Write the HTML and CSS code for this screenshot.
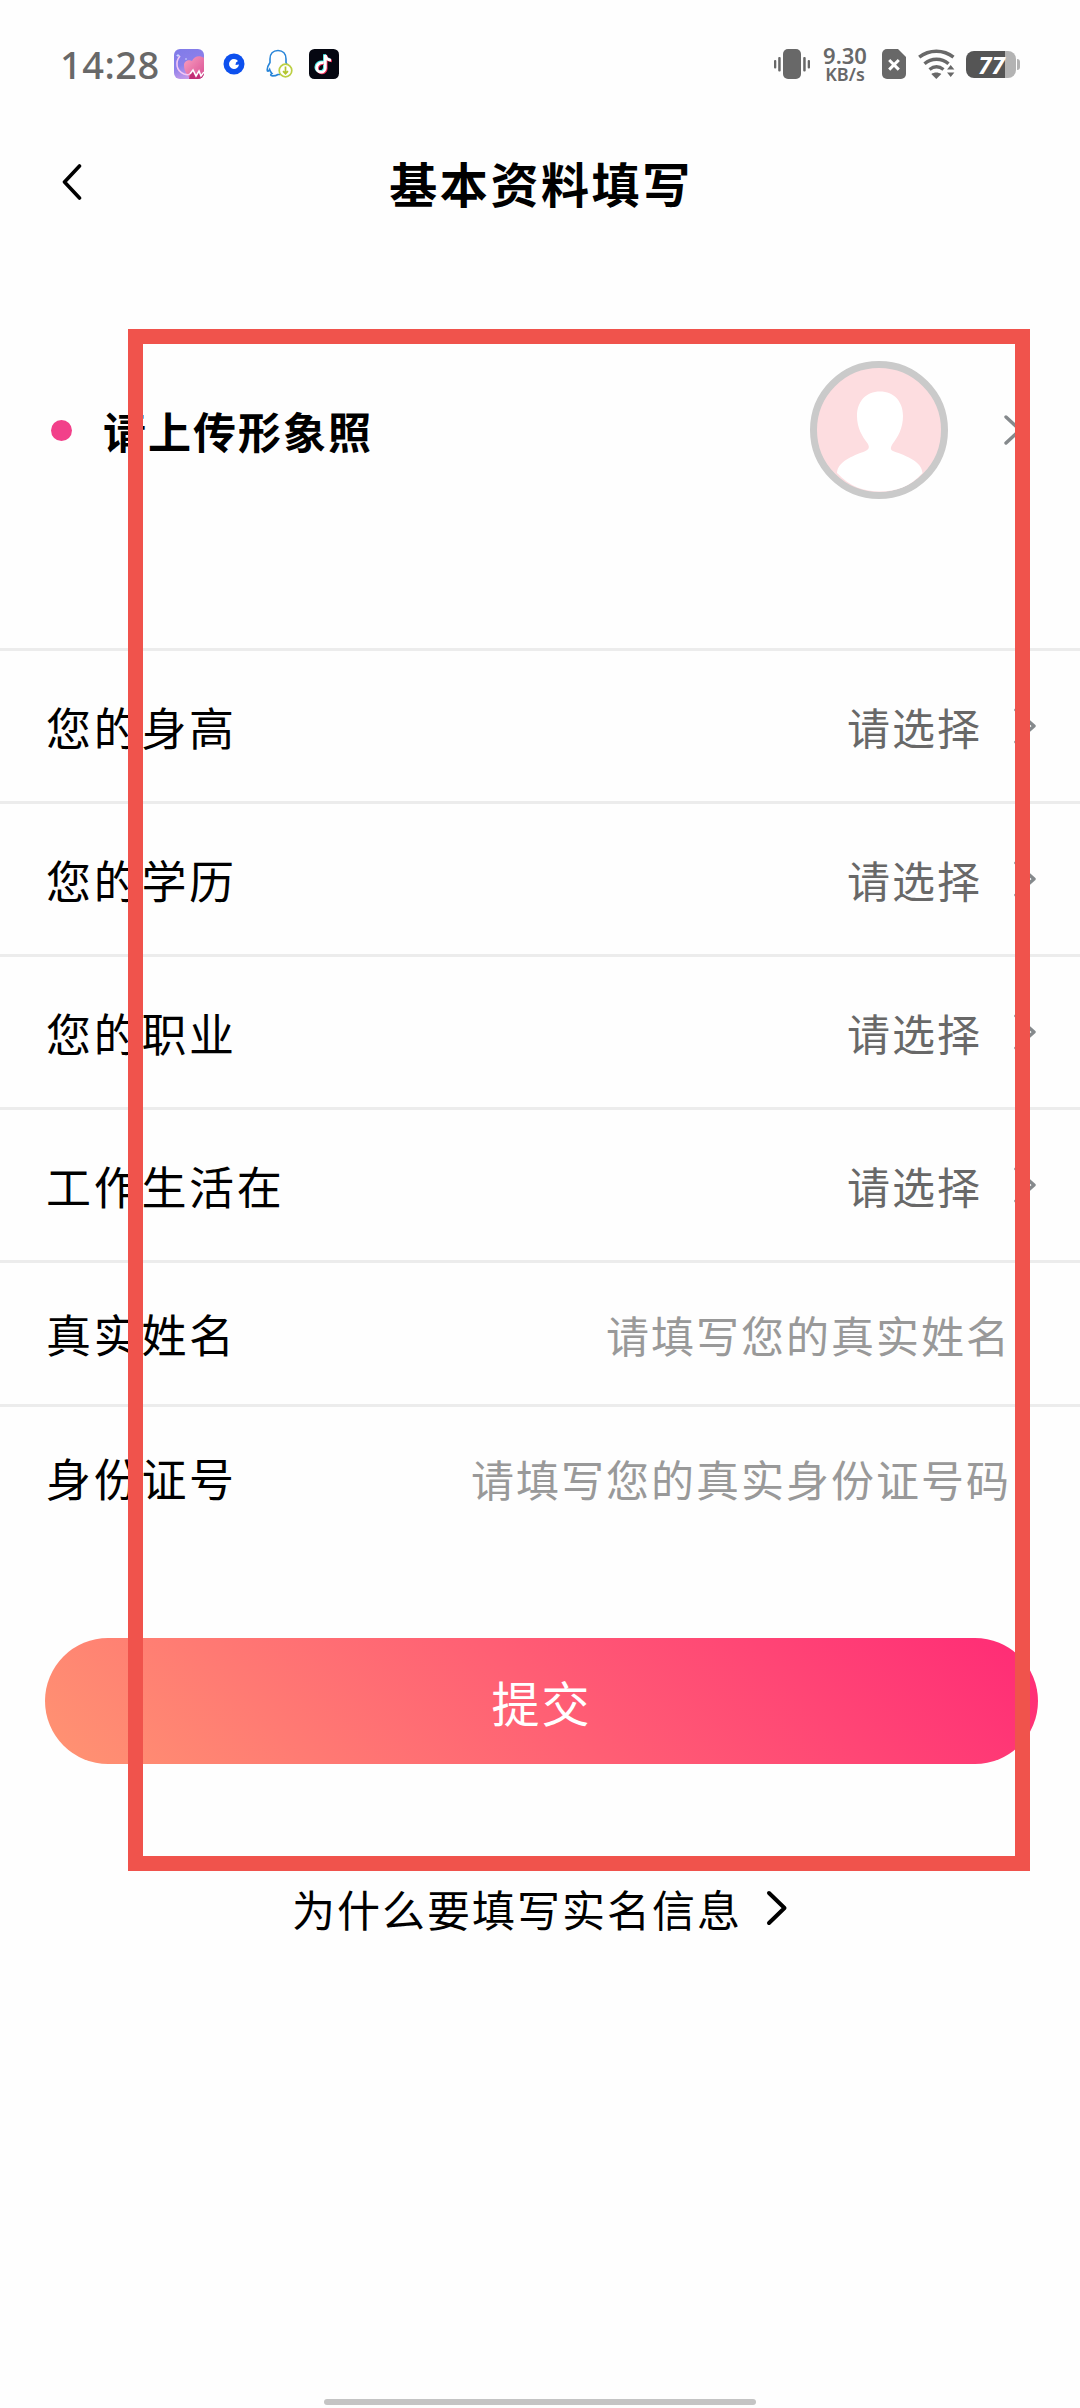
FILE: index.html
```html
<!DOCTYPE html>
<html lang="zh-CN">
<head>
<meta charset="utf-8">
<title>基本资料填写</title>
<link rel="stylesheet" href="styles.css">
</head>
<body>
<div class="screen">
  <header class="status">
    <div class="status-left">
      <span class="clock">14:28</span>
      <svg class="app-icon" width="30" height="30" viewBox="0 0 30 30">
        <defs>
          <linearGradient id="sky" x1="0" y1="0" x2=".4" y2="1"><stop offset="0" stop-color="#7f7be8"/><stop offset=".55" stop-color="#8b7fea"/><stop offset="1" stop-color="#c79bea"/></linearGradient>
          <linearGradient id="heart" x1="0" y1="0" x2="1" y2="1"><stop offset="0" stop-color="#f9a0c0"/><stop offset="1" stop-color="#d94e93"/></linearGradient>
          <clipPath id="tile"><rect width="30" height="30" rx="6"/></clipPath>
        </defs>
        <g clip-path="url(#tile)">
          <rect width="30" height="30" fill="url(#sky)"/>
          <path d="M10 16c0-4 5-6 8-4 2-5 8-6 12-3v21H18c-5-3-8-8-8-14z" fill="url(#heart)"/>
          <path d="M6 7c-5 6-4 15 4 18 3 1 5 1 7 0" fill="none" stroke="#f3c6f5" stroke-width="1.6"/>
          <path d="M16 25l3-5 2 6 4-4 1 5 4-5v8H15z" fill="#c22f76"/>
          <path d="M16 25l3-4 3 6 3-5 2 5 3-4" fill="none" stroke="#fff" stroke-width="1.6"/>
          <path d="M4 5v3M2.500 6.500h3M12 9v2" stroke="#cdd7ff" stroke-width="1"/>
        </g>
      </svg>
      <svg class="ring-icon" width="22" height="22" viewBox="0 0 22 22"><circle cx="11" cy="11" r="10.500" fill="#0d50ee"/><path d="M11 6a5 5 0 1 0 5 5.500l-3.500.5.500-2.500 2-1.500A5 5 0 0 0 11 6z" fill="#fff"/></svg>
      <svg class="qq-icon" width="27" height="30" viewBox="0 0 27 30">
        <path d="M12 1.500c-5 0-8 3.500-8 8.500v3.500c-2 3-3.300 6-2.600 8.500.6.600 1.600-.500 2.200-1.500.5 2 1.400 3 2.400 4-2 1-1.600 2.400.5 2.400 2.500 0 4-.4 5.500-1.400h2M12 1.500c5 0 8 3.500 8 8.500v3.500l1 2" fill="none" stroke="#2784d8" stroke-width="1.600"/>
        <circle cx="19.500" cy="21.500" r="6.300" fill="#fff" stroke="#bccf43" stroke-width="1.700"/>
        <path d="M19.500 17.500v7M17 22.200l2.500 2.500 2.500-2.500" fill="none" stroke="#b3c62f" stroke-width="1.700"/>
      </svg>
      <svg class="note-icon" width="30" height="30" viewBox="0 0 30 30">
        <rect width="30" height="30" rx="5.500" fill="#050711"/>
        <g fill="none" stroke-width="2.800">
          <path d="M14.700 13.700c-4-.500-7 1.800-7 5a4.300 4.300 0 0 0 8.600.300V6c.500 3.200 2.700 5 5.700 5.200" stroke="#43e4e6" transform="translate(-.9 -.7)"/>
          <path d="M14.700 13.700c-4-.500-7 1.800-7 5a4.300 4.300 0 0 0 8.600.300V6c.500 3.200 2.700 5 5.700 5.200" stroke="#ee2a58" transform="translate(.9 .7)"/>
          <path d="M14.700 13.700c-4-.500-7 1.800-7 5a4.300 4.300 0 0 0 8.600.300V6c.500 3.200 2.700 5 5.700 5.200" stroke="#fff"/>
        </g>
      </svg>
    </div>
    <div class="status-right">
      <svg class="vibrate" width="36" height="30" viewBox="0 0 36 30" fill="#686868"><rect x="9" width="18" height="30" rx="5"/><rect x="4.200" y="8" width="2.500" height="14.500" rx="1"/><rect y="11" width="2.300" height="8.500" rx="1"/><rect x="29.200" y="8" width="2.500" height="14.500" rx="1"/><rect x="33.700" y="11" width="2.300" height="8.500" rx="1"/></svg>
      <div class="speed"><span class="rate">9.30</span><span class="unit">KB/s</span></div>
      <svg class="sim" width="24" height="30" viewBox="0 0 24 30"><path d="M5 0h11l8 8v17a5 5 0 0 1-5 5H5a5 5 0 0 1-5-5V5a5 5 0 0 1 5-5z" fill="#686868"/><path d="M7.200 11l9.600 9.600M16.800 11l-9.600 9.600" stroke="#fff" stroke-width="3"/></svg>
      <svg class="wifi" width="37" height="30" viewBox="0 0 37 30"><g fill="none" stroke="#686868" stroke-width="3.400"><path d="M1.200 8.200c10-8 24.300-8 34.300 0"/><path d="M6.500 14.700c7-6 17-6 24 0"/><path d="M11.500 20.500c4.500-3.500 9.500-3.500 14 0"/></g><path d="M13.300 25c3-2 7-2 10 0l-5 5z" fill="#686868"/><path d="M28 20l4.500-6 5 6v4l-5 6-4.500-6z" fill="#fff"/><path d="M29 20.500l3.700-4.500 3.700 4.500zM29 23.500h7.400L32.700 28z" fill="#686868"/></svg>
      <div class="battery"><span class="level">77</span></div>
    </div>
  </header>

  <nav class="navbar">
    <svg class="back" width="20" height="36" viewBox="0 0 20 36"><path d="M17.500 2L2.500 18l15 16" fill="none" stroke="#000" stroke-width="3.600" stroke-linecap="round" stroke-linejoin="round"/></svg>
    <h1 class="title">基本资料填写</h1>
  </nav>

  <main>
    <section class="photo-row">
      <span class="dot"></span>
      <span class="photo-label">请上传形象照</span>
      <svg class="avatar" width="138" height="138" viewBox="0 0 138 138">
        <clipPath id="face"><circle cx="69" cy="69" r="62.500"/></clipPath>
        <circle cx="69" cy="69" r="65.500" fill="#fddde0" stroke="#cacaca" stroke-width="7"/>
        <path clip-path="url(#face)" d="M70 30.500c14 0 23 10 23 24.500 0 12-5 21-10.500 28-2.500 4-2 6 1 7.300C97 95 112 101 112.500 112 100 126 86 130.500 70 130.500S40 126 27 112C27.500 101 42 95 55 90.300c4-1.800 5-4 2.500-8C52 75 47 67 47 55c0-14.500 9-24.500 23-24.500z" fill="#fff"/>
      </svg>
      <svg class="arrow" width="19" height="30" viewBox="0 0 19 30"><path d="M2 2l14 13L2 28"/></svg>
    </section>

    <section class="form">
      <div class="row"><span class="label">您的身高</span><span class="choice">请选择</span><svg class="chevron" width="23" height="36" viewBox="0 0 23 36"><path d="M2 2l18 16L2 34"/></svg></div>
      <div class="row"><span class="label">您的学历</span><span class="choice">请选择</span><svg class="chevron" width="23" height="36" viewBox="0 0 23 36"><path d="M2 2l18 16L2 34"/></svg></div>
      <div class="row"><span class="label">您的职业</span><span class="choice">请选择</span><svg class="chevron" width="23" height="36" viewBox="0 0 23 36"><path d="M2 2l18 16L2 34"/></svg></div>
      <div class="row"><span class="label">工作生活在</span><span class="choice">请选择</span><svg class="chevron" width="23" height="36" viewBox="0 0 23 36"><path d="M2 2l18 16L2 34"/></svg></div>
      <div class="row input-row"><span class="label">真实姓名</span><span class="hint">请填写您的真实姓名</span></div>
      <div class="row input-row"><span class="label">身份证号</span><span class="hint">请填写您的真实身份证号码</span></div>
    </section>

    <button class="submit">提交</button>
    <a class="why"><span>为什么要填写实名信息</span><svg width="22" height="36" viewBox="0 0 22 36"><path d="M3 3l15.500 15L3 33" fill="none" stroke="#000" stroke-width="4" stroke-linecap="round" stroke-linejoin="round"/></svg></a>
  </main>
  <div class="home-bar"></div>
  <div class="marker"></div>
</div>
</body>
</html>
```
FILE: styles.css
```css
* { box-sizing: border-box; }
body { margin: 0; background: #fefefe; font-family: "Noto Sans CJK SC", "Noto Sans", sans-serif; color: #000; }
.screen { position: relative; display: flex; flex-direction: column; width: 1080px; height: 2408px; overflow: hidden; }

.status { display: flex; justify-content: space-between; height: 128px; padding: 0 60px 0 60px; }
.status-left, .status-right { display: flex; align-items: center; height: 128px; color: #686868; }
.clock { width: 99px; font: 500 38px/1 "Noto Sans", sans-serif; letter-spacing: .5px; white-space: nowrap; }
.app-icon { margin-left: 15px; }
.ring-icon { margin-left: 19px; }
.qq-icon { margin-left: 21px; }
.note-icon { margin-left: 16px; }
.speed { display: flex; flex-direction: column; align-items: center; width: 46px; margin-left: 12px; font-family: "Noto Sans", sans-serif; font-weight: 600; }
.rate { font-size: 22px; line-height: 19px; }
.unit { font-size: 18px; line-height: 18px; }
.sim { margin-left: 14px; }
.wifi { margin-left: 12px; }
.battery { display: flex; align-items: center; justify-content: center; width: 50px; height: 27px; margin: 0 4px 0 11px; border-radius: 8px; background: linear-gradient(90deg, #555 39px, #b3b3b3 39px); }
.battery::after { content: ""; flex: none; width: 3px; height: 11px; margin-right: -4px; border-radius: 0 3px 3px 0; background: #b3b3b3; }
.level { flex: 1; text-align: center; font: italic 700 24px/27px "Noto Sans", sans-serif; color: #fff; }

.navbar { display: flex; align-items: center; height: 108px; padding-left: 62px; }
.back { flex: none; }
.title { flex: 1; margin: 0 80px 0 0; text-align: center; font-size: 48px; line-height: 72px; font-weight: 700; letter-spacing: 2.600px; }

.photo-row { display: flex; align-items: center; height: 412px; margin-top: 0; padding: 0 57px 24px 51px; }
.dot { width: 21px; height: 21px; border-radius: 50%; background: #f2408a; }
.photo-label { flex: 1; margin-left: 31px; font-size: 43px; font-weight: 700; letter-spacing: 2px; }
.arrow { margin-left: 56px; }
.arrow path, .chevron path { fill: none; stroke: #85898c; stroke-width: 3.400px; stroke-linecap: round; stroke-linejoin: round; }

.row { display: flex; align-items: center; height: 153px; padding: 0 43px 0 46px; border-top: 3px solid #ececec; }
.label { flex: 1; font-size: 45px; letter-spacing: 2.700px; }
.choice { font-size: 43px; letter-spacing: 2px; color: #686868; }
.chevron { margin-left: 32px; }
.input-row { height: 144px; padding-right: 69px; }
.hint { font-size: 43px; letter-spacing: 2px; color: #999; }

.submit { display: block; width: 993px; height: 126px; margin: 90px 0 0 45px; padding: 0; border: 0; border-radius: 63px; background: linear-gradient(45deg, #ff9472, #ff2a76); color: #fff; font-family: inherit; font-size: 48px; letter-spacing: 2px; }
.why { display: flex; align-items: center; justify-content: center; height: 60px; margin-top: 114px; font-size: 43px; letter-spacing: 2px; }
.why svg { margin-left: 24px; }

.home-bar { align-self: center; width: 432px; height: 6px; margin: auto 0 3px; border-radius: 3px; background: #c4c4c4; }
.marker { position: absolute; left: 128px; top: 329px; width: 902px; height: 1542px; border: 15px solid #f0534c; }
```
